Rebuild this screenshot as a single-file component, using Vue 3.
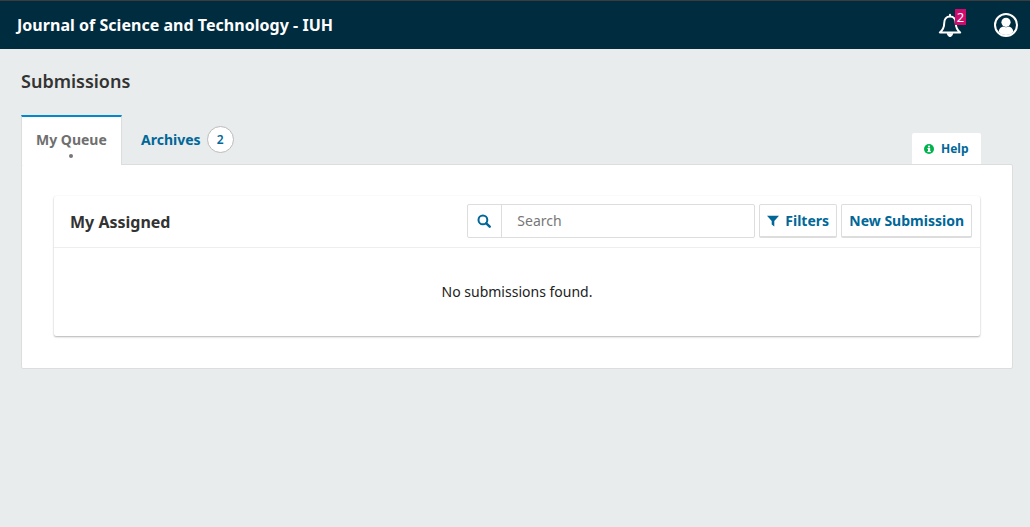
<script setup>
const title = 'Journal of Science and Technology - IUH'
</script>

<template>
  <div class="page">
    <header class="topbar">
      <span class="brand">{{ title }}</span>
      <div class="top-actions">
        <div class="bell">
          <svg width="24" height="26" viewBox="0 -1 24 26" fill="none" stroke="#fff" stroke-width="2" stroke-linejoin="round" stroke-linecap="round">
            <path d="M12 3.5c-3.8 0-5.8 3-5.8 6.8 0 4.2-1 6.6-4.4 9.2h20.4c-3.4-2.6-4.4-5-4.4-9.2 0-3.8-2-6.8-5.8-6.8z" />
            <path d="M12 1.8v1.4" />
            <path d="M9.3 20.5c.2 1.9 1.3 3 2.7 3s2.5-1.1 2.7-3z" fill="#fff" stroke-width="1" />
          </svg>
          <span class="count">2</span>
        </div>
        <svg class="avatar" width="24" height="24" viewBox="0 0 24 24">
          <circle cx="12" cy="12" r="11" fill="#002c40" stroke="#fff" stroke-width="2" />
          <circle cx="12" cy="9.3" r="4.6" fill="#fff" />
          <path d="M4.6 18.4c.7-3.2 2.9-4.6 4.6-4.8 1.6 1 4 1 5.6 0 1.7.2 3.9 1.6 4.6 4.8-1.7 2.2-4.4 3.6-7.4 3.6s-5.7-1.4-7.4-3.6z" fill="#fff" />
        </svg>
      </div>
    </header>

    <main class="content">
      <h1 class="heading">Submissions</h1>
      <div class="tabs-row">
        <div class="tabs">
          <div class="tab active">
            My Queue
            <span class="dot"></span>
          </div>
          <div class="tab link">
            Archives
            <span class="badge">2</span>
          </div>
        </div>
        <div class="help">
          <svg width="10" height="10" viewBox="0 0 10 10">
            <circle cx="5" cy="5" r="5" fill="#00b24e" />
            <rect x="4" y="4" width="2.2" height="4" fill="#fff" />
            <rect x="3.4" y="7" width="3.4" height="1.1" fill="#fff" />
            <rect x="3.4" y="4" width="1.2" height="1" fill="#fff" />
            <circle cx="5" cy="2.6" r="1.1" fill="#fff" />
          </svg>
          Help
        </div>
      </div>

      <section class="panel">
        <div class="card">
          <div class="card-head">
            <h2 class="card-title">My Assigned</h2>
            <div class="controls">
              <div class="search">
                <span class="search-icon">
                  <svg width="14" height="14" viewBox="0 0 14 14" fill="none" stroke="#006798">
                    <circle cx="5.9" cy="5.9" r="4.4" stroke-width="2" />
                    <path d="M9.3 9.3l3.4 3.4" stroke-width="2.4" stroke-linecap="round" />
                  </svg>
                </span>
                <span class="search-text">Search</span>
              </div>
              <button class="btn filters">
                <svg width="12" height="12" viewBox="0 0 12 12">
                  <path d="M0 .8h12L7.3 6v5.6L4.7 9.6V6z" fill="#006798" />
                </svg>
                Filters
              </button>
              <button class="btn">New Submission</button>
            </div>
          </div>
          <div class="empty">No submissions found.</div>
        </div>
      </section>
    </main>
  </div>
</template>

<style scoped>
.page {
  min-height: 527px;
  background: #e9ecec;
  font-family: "Noto Sans", sans-serif;
  color: #222;
}
.topbar {
  box-sizing: border-box;
  height: 49px;
  background: #002c40;
  border-top: 1px solid #3c3c3c;
  display: flex;
  align-items: center;
  justify-content: space-between;
  padding: 0 12px 0 17px;
}
.brand {
  color: #fff;
  font-size: 16px;
  font-weight: 700;
  line-height: 20px;
  margin-top: -1px;
  letter-spacing: 0.03px;
}
.top-actions {
  display: flex;
  align-items: center;
  gap: 32px;
}
.bell {
  position: relative;
  width: 24px;
  height: 26px;
}
.bell svg {
  display: block;
}
.count {
  position: absolute;
  left: 17px;
  top: -3px;
  width: 11px;
  height: 16px;
  background: #d00a6c;
  color: #fff;
  font-size: 13px;
  line-height: 16px;
  text-align: center;
}
.avatar {
  display: block;
}
.content {
  padding: 19px 17px 0 21px;
}
.heading {
  margin: 0;
  font-size: 18px;
  font-weight: 600;
  line-height: 26px;
  color: #333;
}
.tabs-row {
  margin-top: 21px;
  height: 49px;
  display: flex;
  justify-content: space-between;
  align-items: flex-end;
  padding-right: 32px;
}
.tabs {
  display: flex;
  height: 100%;
}
.tab {
  position: relative;
  box-sizing: border-box;
  height: 49px;
  font-size: 14px;
  font-weight: 700;
  display: flex;
  align-items: center;
  padding: 0 15px;
  line-height: 20px;
  white-space: nowrap;
}
.tab.active {
  width: 101px;
  background: #fff;
  border-top: 2px solid #008acb;
  border-right: 1px solid #ddd;
  border-left: 1px solid #ddd;
  color: #6f6f6f;
  padding: 0 0 3px 14px;
  z-index: 1;
  height: 50px;
  margin-bottom: -1px;
}
.dot {
  position: absolute;
  left: 47px;
  top: 37px;
  width: 4px;
  height: 4px;
  border-radius: 50%;
  background: #777;
}
.tab.link {
  color: #006798;
  padding: 0 0 0 19px;
  gap: 6px;
}
.badge {
  box-sizing: border-box;
  width: 27px;
  height: 27px;
  border-radius: 50%;
  border: 1px solid #bbb;
  background: #fff;
  font-size: 12px;
  font-weight: 600;
  line-height: 25px;
  text-align: center;
  color: #006798;
}
.help {
  box-sizing: border-box;
  width: 69px;
  height: 31px;
  background: #fff;
  border-radius: 2px 2px 0 0;
  display: flex;
  align-items: center;
  gap: 7px;
  padding-left: 12px;
  font-size: 12px;
  font-weight: 700;
  color: #006798;
}
.panel {
  box-sizing: border-box;
  height: 205px;
  background: #fff;
  border: 1px solid #ddd;
  border-radius: 2px;
  padding: 31px 32px 0;
}
.card {
  height: 140px;
  box-sizing: border-box;
  background: #fff;
  border-radius: 2px;
  box-shadow: 0 1px 2px rgba(0, 0, 0, 0.3), 0 0 1px rgba(0, 0, 0, 0.05);
}
.card-head {
  box-sizing: border-box;
  height: 52px;
  border-bottom: 1px solid #eee;
  display: flex;
  align-items: center;
  justify-content: space-between;
  padding: 0 8px 0 16px;
}
.card-title {
  margin: 0;
  font-size: 16px;
  font-weight: 700;
  line-height: 24px;
  color: #333;
}
.controls {
  display: flex;
  gap: 4px;
  align-items: center;
  margin-top: -1px;
}
.search {
  box-sizing: border-box;
  width: 288px;
  height: 34px;
  display: flex;
  border: 1px solid #ddd;
  border-radius: 2px;
}
.search-icon {
  width: 34px;
  box-sizing: border-box;
  border-right: 1px solid #ddd;
  display: flex;
  align-items: center;
  justify-content: center;
  padding-right: 2px;
}
.search-text {
  padding-left: 15px;
  font-size: 14px;
  line-height: 32px;
  color: #777;
}
.btn {
  box-sizing: border-box;
  height: 34px;
  padding: 0 7px;
  background: #fff;
  border: 1px solid #ddd;
  border-bottom-width: 2px;
  border-radius: 2px;
  font-family: inherit;
  font-size: 14px;
  font-weight: 700;
  color: #006798;
  display: flex;
  align-items: center;
  gap: 6px;
}
.btn.filters {
  width: 78px;
}
.empty {
  text-align: center;
  font-size: 14px;
  line-height: 20px;
  padding-top: 34px;
  color: #222;
}
</style>

<style>
body {
  background: #e9ecec;
}
</style>
